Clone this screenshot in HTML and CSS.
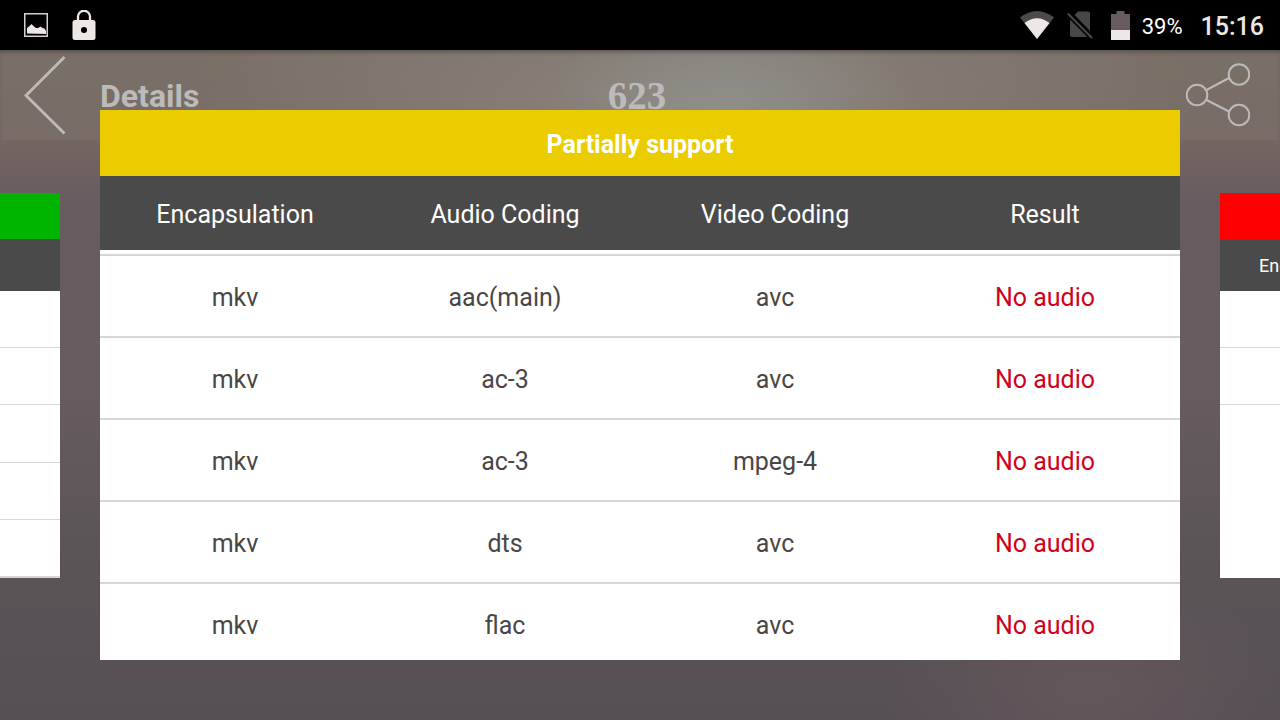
FILE: index.html
```html
<!DOCTYPE html>
<html lang="en">
<head>
<meta charset="utf-8">
<meta name="viewport" content="width=device-width, initial-scale=1">
<title>Details</title>
<link rel="stylesheet" href="styles.css">
</head>
<body>
<div class="statusbar">
  <div class="status-group status-left">
    <svg width="24" height="24" viewBox="0 0 24 24" aria-hidden="true"><rect x=".75" y=".75" width="22.5" height="22.5" fill="none" stroke="#d5d0ce" stroke-width="1.5"/><path d="M3 20.500V15l2-1.500 2.500-2.500 2.500 2.500 2 1.500h2l2.500-1.500 2 1.500 2 .5 1.500 2.500v3z" fill="#ede7e5"/></svg>
    <svg width="24" height="30" viewBox="0 0 24 30" aria-hidden="true"><path d="M6 11V6.800a6 6 0 0 1 12 0V11" fill="none" stroke="#ede7e5" stroke-width="2.300"/><rect x=".5" y="10" width="23" height="20" rx="2.500" fill="#ede7e5"/><circle cx="12" cy="20" r="3" fill="#000"/></svg>
  </div>
  <div class="status-group status-right">
    <svg width="34" height="28" viewBox="0 0 34 28" aria-hidden="true"><path d="M0 6.500Q17-6.500 34 6.500L17 28z" fill="#4a4a4a"/><path d="M4.500 12Q17 2.500 29.500 12L17 28z" fill="#ede7e5"/></svg>
    <svg class="sim" width="26" height="28" viewBox="0 0 26 28" aria-hidden="true"><path d="M7.500 4L11 .5h10a2 2 0 0 1 2 2V20zM3 8.500L20.500 26H5a2 2 0 0 1-2-2z" fill="#484848"/><path d="M.8 2.500L25 27" stroke="#484848" stroke-width="2.200"/></svg>
    <svg class="battery" width="19" height="29" viewBox="0 0 19 29" aria-hidden="true"><path d="M5.500 0h8v3H19v16H0V3h5.500z" fill="#675b5f"/><path d="M0 19h19v10H0z" fill="#ede7e5"/></svg>
    <span class="percent">39%</span>
    <time class="clock">15:16</time>
  </div>
</div>

<header class="appbar">
  <div class="appbar-start">
    <button class="icon-button" type="button" aria-label="Back">
      <svg width="42" height="80" viewBox="0 0 42 80"><path d="M40.500 2L2 40.500 40.500 78.500" fill="none" stroke="#bdbbb9" stroke-width="2.900"/></svg>
    </button>
    <h1 class="title">Details</h1>
  </div>
  <span class="score">623</span>
  <button class="icon-button share" type="button" aria-label="Share">
    <svg width="64" height="64" viewBox="0 0 64 64"><g fill="none" stroke="#bdbbb9" stroke-width="2"><circle cx="11" cy="32" r="10.300"/><circle cx="53" cy="11.500" r="10.300"/><circle cx="53" cy="52" r="10.300"/><path d="M20.500 27L43 15M20.500 37L43 48.500"/></g></svg>
  </button>
</header>

<main class="carousel">
  <section class="side-card supported" aria-label="Supported">
    <div class="side-title"></div>
    <div class="side-head"></div>
    <ul class="side-rows"><li></li><li></li><li></li><li></li><li></li></ul>
  </section>

  <section class="card">
    <h2 class="card-title">Partially support</h2>
    <div class="card-scroll">
      <table class="codecs">
        <thead>
          <tr><th scope="col">Encapsulation</th><th scope="col">Audio Coding</th><th scope="col">Video Coding</th><th scope="col">Result</th></tr>
        </thead>
        <tbody>
          <tr class="edge"><td colspan="4"></td></tr>
          <tr><td>mkv</td><td>aac(main)</td><td>avc</td><td class="bad">No audio</td></tr>
          <tr><td>mkv</td><td>ac-3</td><td>avc</td><td class="bad">No audio</td></tr>
          <tr><td>mkv</td><td>ac-3</td><td>mpeg-4</td><td class="bad">No audio</td></tr>
          <tr><td>mkv</td><td>dts</td><td>avc</td><td class="bad">No audio</td></tr>
          <tr><td>mkv</td><td>flac</td><td>avc</td><td class="bad">No audio</td></tr>
        </tbody>
      </table>
    </div>
  </section>

  <section class="side-card unsupported" aria-label="Unsupported">
    <div class="side-title"></div>
    <div class="side-head">Encapsulation</div>
    <ul class="side-rows"><li></li><li></li></ul>
  </section>
</main>
</body>
</html>
```

FILE: styles.css
```css
* { box-sizing: border-box; }

body {
  margin: 0;
  height: 100vh;
  display: flex;
  flex-direction: column;
  overflow: hidden;
  font-family: Roboto, "Liberation Sans", sans-serif;
  background:
    radial-gradient(ellipse 14% 14% at 57% 14%, rgba(150, 152, 150, .6), transparent),
    radial-gradient(ellipse 40% 24% at 54% 14%, rgba(146, 138, 132, .75), transparent),
    radial-gradient(ellipse 16% 16% at 85% 96%, rgba(105, 90, 93, .7), transparent),
    linear-gradient(#75695f 7%, #736561 20%, #685c60 28%, #665b5f 55%, #5a5457 78%, #564f55 100%);
}

h1, h2, ul { margin: 0; padding: 0; }

.statusbar {
  flex: none;
  height: 50px;
  padding: 0 16px 0 24px;
  display: flex;
  align-items: center;
  justify-content: space-between;
  background: #000;
  color: #ede7e5;
}
.status-group { display: flex; align-items: center; }
.status-left { gap: 24px; }
.sim { margin-left: 13px; }
.battery { margin-left: 18px; }
.percent { margin-left: 12px; padding-top: 3px; font-size: 22px; line-height: 28px; color: #fff; }
.clock { margin-left: 18px; padding-top: 3px; font-size: 25px; line-height: 28px; font-weight: 500; }

.appbar {
  flex: none;
  height: 90px;
  padding: 0 30px 0 24px;
  display: grid;
  grid-template-columns: 1fr auto 1fr;
  align-items: center;
  color: #bdbbba;
  background: rgba(140, 138, 128, .2);
  box-shadow: inset 0 4px 4px -2px rgba(70, 60, 65, .6);
}
.appbar-start { display: flex; align-items: center; gap: 34px; }
.icon-button { display: flex; padding: 0; border: 0; background: none; }
.share { justify-self: end; }
.title { padding-top: 2px; font-size: 32px; line-height: 40px; font-weight: 700; }
.score { padding-top: 2px; font: 700 39px/44px "Liberation Serif", serif; }

.carousel {
  flex: 1;
  min-height: 0;
  margin-top: -30px;
  padding-bottom: 60px;
  display: grid;
  grid-template-columns: 60px minmax(0, 1fr) 60px;
  grid-template-rows: minmax(0, 1fr);
  gap: 40px;
  align-items: center;
}

.card {
  align-self: stretch;
  position: relative;
  display: flex;
  flex-direction: column;
  overflow: hidden;
  background: #fff;
}
.card-title {
  flex: none;
  padding: 19px 0 15px;
  background: #eacc00;
  color: #fff;
  font-size: 25px;
  line-height: 32px;
  font-weight: 700;
  text-align: center;
}
.card-scroll { flex: 1; min-height: 0; overflow: hidden; }

.codecs {
  width: 100%;
  table-layout: fixed;
  border-collapse: separate;
  border-spacing: 0;
  font-size: 25px;
  line-height: 32px;
  text-align: center;
  color: #4a4646;
}
.codecs th {
  height: 74px;
  padding: 4px 0 0;
  background: #4a4a4a;
  color: #fff;
  font-weight: 400;
}
.codecs td { height: 82px; padding: 4px 0 0; border-bottom: 2px solid #d6d6d6; }
.codecs .edge td { height: 6px; }
.codecs .bad { color: #d0021b; }

.side-card { overflow: hidden; background: #fff; }
.side-title { height: 46px; }
.supported .side-title { background: #00b400; }
.unsupported .side-title { background: #f00; }
.side-head {
  height: 52px;
  padding-left: 39px;
  background: #4a4a4a;
  color: #fff;
  font-size: 18px;
  line-height: 54px;
}
.side-rows {
  height: 287px;
  display: grid;
  grid-template-rows: repeat(5, 1fr);
  list-style: none;
}
.side-rows li { border-bottom: 1px solid #d6d6d6; }
.supported .side-rows li:last-child { border-bottom-width: 2px; }
```
